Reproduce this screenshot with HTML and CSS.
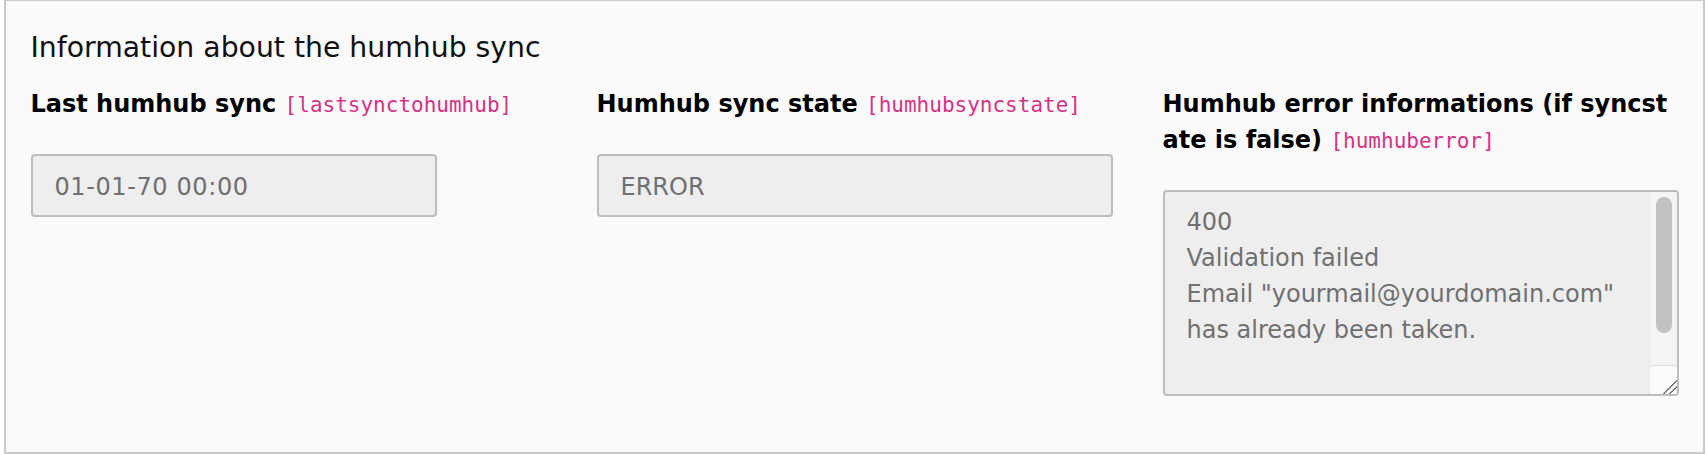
FILE: index.html
```html
<!DOCTYPE html>
<html lang="en">
<head>
<meta charset="utf-8">
<title>Humhub sync</title>
<link rel="stylesheet" href="styles.css">
</head>
<body>
<div class="panel">
  <h3 class="panel-title">Information about the humhub sync</h3>
  <div class="fields">
    <div class="field">
      <label class="field-label">Last humhub sync <code>[lastsynctohumhub]</code></label>
      <input class="text-input text-input-short" type="text" value="01-01-70 00:00" readonly>
    </div>
    <div class="field">
      <label class="field-label">Humhub sync state <code>[humhubsyncstate]</code></label>
      <input class="text-input" type="text" value="ERROR" readonly>
    </div>
    <div class="field">
      <label class="field-label">Humhub error informations (if syncstate is false) <code>[humhuberror]</code></label>
      <div class="textarea">
        <div class="textarea-text">400
Validation failed
Email "yourmail@yourdomain.com" has already been taken.</div>
        <div class="scrollbar">
          <div class="scroll-thumb"></div>
          <div class="scroll-fill"></div>
          <div class="scroll-corner">
            <svg width="14" height="14" viewBox="0 0 14 14"><path d="M0.5 14 L14 0.5 M6.5 14 L14 6.5" stroke="#5a5a5a" stroke-width="1.1" fill="none"/></svg>
          </div>
        </div>
      </div>
    </div>
  </div>
</div>
</body>
</html>
```
FILE: styles.css
```css
html, body {
  margin: 0;
  padding: 0;
  background: #ffffff;
}

body {
  font-family: "DejaVu Sans", Verdana, sans-serif;
  color: #111;
}

.panel {
  box-sizing: border-box;
  margin: -1px 1px 0 4px;
  border: 2px solid #cbcbcb;
  background: #fafafa;
  padding: 30px 24.5px 56px 24.5px;
}

.panel-title {
  margin: 0 0 21px 0;
  font-size: 28.3px;
  line-height: 34px;
  font-weight: normal;
  color: #111;
}

.fields {
  display: grid;
  grid-template-columns: 516px 516px 516px;
  column-gap: 50px;
  align-items: start;
}

.field {
  display: flex;
  flex-direction: column;
  align-items: flex-start;
}

.field-label {
  display: block;
  width: 100%;
  margin-bottom: 31px;
  font-size: 24px;
  line-height: 36px;
  font-weight: bold;
  color: #000;
  word-break: break-all;
}

.field-label code {
  font-family: "DejaVu Sans Mono", monospace;
  font-weight: normal;
  font-size: 21px;
  color: #d63384;
}

.text-input {
  box-sizing: border-box;
  width: 516px;
  height: 63px;
  margin: 0;
  padding: 3px 22px 0 22px;
  border: 2px solid #bdbdbd;
  border-radius: 4px;
  background: #eeeeee;
  font-family: "DejaVu Sans", Verdana, sans-serif;
  font-size: 24px;
  color: #707070;
  outline: none;
}

.text-input-short {
  width: 406px;
  letter-spacing: 0.6px;
}

.textarea {
  box-sizing: border-box;
  display: flex;
  width: 516px;
  height: 206px;
  border: 2px solid #bdbdbd;
  border-radius: 4px;
  background: #eeeeee;
  overflow: hidden;
}

.textarea-text {
  flex: 1;
  padding: 12px 22px 0 22px;
  font-size: 24px;
  line-height: 36px;
  color: #707070;
  white-space: pre-line;
}

.scrollbar {
  width: 27px;
  display: flex;
  flex-direction: column;
  background: #f4f4f4;
  border-left: 1px solid #e8e8e8;
}

.scroll-thumb {
  margin: 5px 5px 0 6px;
  height: 136px;
  border-radius: 8px;
  background: #c1c1c1;
}

.scroll-fill {
  flex: 1;
}

.scroll-corner {
  height: 28px;
  display: flex;
  justify-content: flex-end;
  align-items: flex-end;
  background: #fbfbfb;
  border-top: 1px solid #dedede;
}

.scroll-corner svg {
  display: block;
}
```
